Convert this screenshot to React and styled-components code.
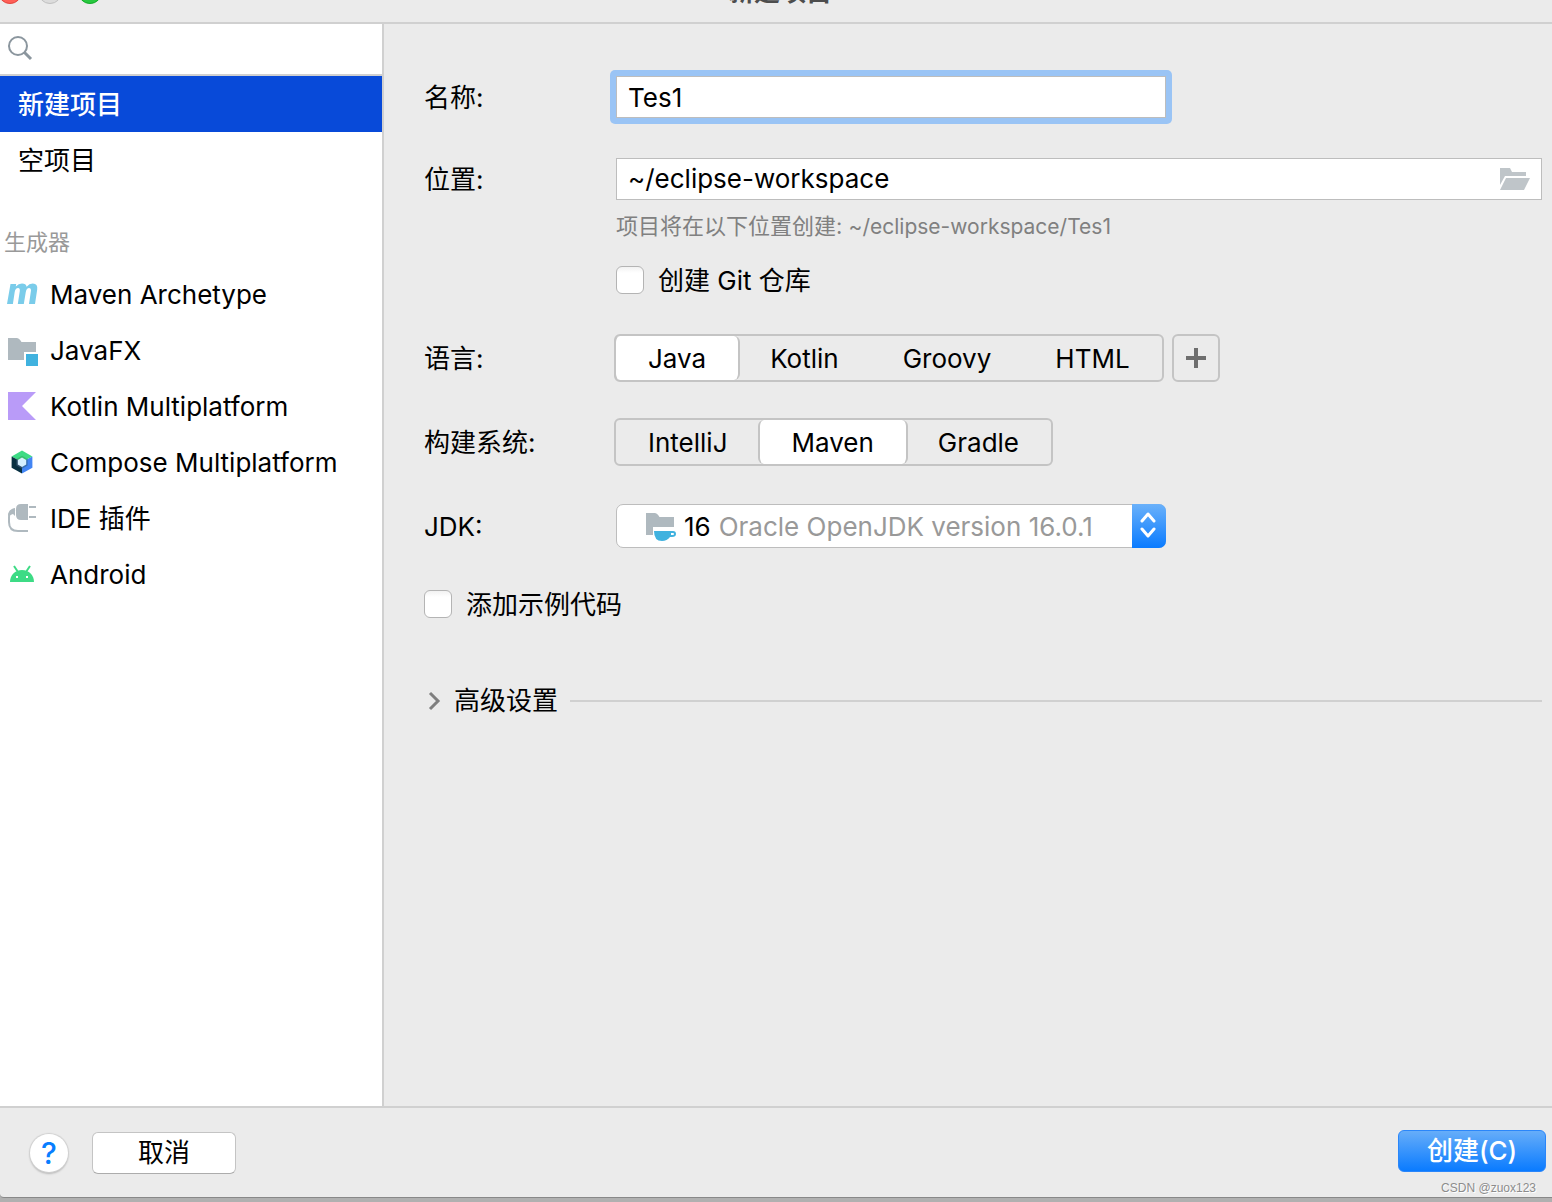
import React, { useState } from 'react';
import styled, { createGlobalStyle, css } from 'styled-components';

const MavenIcon = () => (
  <svg width="32" height="32" viewBox="0 0 32 32" aria-hidden="true">
    <path
      fill="#7accea"
      d="M4.500 5h5.700l-.4 2.400Q12.500 4.600 16 4.600q4 0 4.600 3.200 2.600-3.200 6.200-3.200 5.200 0 4.400 6L29 25h-6l2-13.500q.3-2.500-1.800-2.500-2.700 0-3.400 4l-2 12h-6l2-13q.3-3-1.700-3-2.700 0-3.400 4l-1.800 12H1z"
    />
  </svg>
);

const JavaFxIcon = () => (
  <svg width="32" height="32" viewBox="0 0 32 32" aria-hidden="true">
    <path fill="#afb9bf" d="M2 3h9q2 0 3.500 2.500L15.500 7H30v10H18v8H2z" />
    <path fill="#40b2df" d="M20 19h12v12H20z" />
  </svg>
);

const KotlinIcon = () => (
  <svg width="32" height="32" viewBox="0 0 32 32" aria-hidden="true">
    <path fill="#b99bf8" d="M2 1h28L16 15l14 14H2z" />
  </svg>
);

const ComposeIcon = () => (
  <svg width="32" height="32" viewBox="0 0 32 32" aria-hidden="true">
    <path fill="#3ddb85" d="M16 3.600 26.400 9.400 16 15 5.600 9.400z" />
    <path fill="#083042" d="M5.600 9.400 16 15v11.500L5.600 20.800z" />
    <path fill="#4285f4" d="M26.400 9.400 16 15v11.500l10.400-5.700z" />
    <path fill="#37bf6e" d="m16 8.800 5.600 3.200-1.800 1.400h-7.600l-1.800-1.400z" />
    <path fill="#2a4b66" d="m10.400 12 2 1.200V17l3.600 2v2.800l-5.600-3.300z" />
    <path fill="#3870b2" d="m21.600 12-2 1.200V17L16 19v2.800l5.600-3.300z" />
    <path fill="#d6f0ff" d="m16 10.500 4.200 2.400v4.600L16 19.900l-4.200-2.400v-4.600z" />
  </svg>
);

const PluginIcon = () => (
  <svg width="32" height="32" viewBox="0 0 32 32" aria-hidden="true">
    <path
      fill="#afb9bf"
      d="M15 1h7v16h-7q-5 0-5-5V6q0-5 5-5zM23 3h7v2h-7zM23 13h7v2h-7z"
    />
    <path fill="#afb9bf" d="M2 13q0-7 7-8v8L7 11z" />
    <path fill="none" stroke="#afb9bf" strokeWidth="2" d="M9 6.500Q3 8 3 14v5q0 9 9 9h10" />
  </svg>
);

const AndroidIcon = () => (
  <svg width="32" height="32" viewBox="0 0 32 32" aria-hidden="true">
    <path fill="none" stroke="#3ddb85" strokeWidth="2" d="m8 7 4 6M24 7l-4 6" />
    <path fill="#3ddb85" d="M4 23C4 16 9 11 16 11s12 5 12 12z" />
    <path fill="#fff" d="M10 17h2v2h-2zM20 17h2v2h-2z" />
  </svg>
);

const SearchIcon = () => (
  <svg width="26" height="26" viewBox="0 0 26 26" aria-hidden="true">
    <circle cx="11" cy="10" r="9" fill="none" stroke="#8b969e" strokeWidth="2" />
    <path stroke="#8b969e" strokeWidth="3" d="m17 16 7 7" />
  </svg>
);

const FolderIcon = () => (
  <svg width="30" height="22" viewBox="0 0 30 22" aria-hidden="true">
    <path fill="#bfc5c9" d="M0 0h10l2 4h14v4H5L0 17z" />
    <path fill="#bfc5c9" d="M6 10h24l-6 12H0z" />
  </svg>
);

const JdkIcon = () => (
  <svg width="30" height="30" viewBox="0 0 30 30" aria-hidden="true">
    <path fill="#afb9bf" d="M0 1h9q2 0 3.500 2.500L13.500 5H28v10H7v8H0z" />
    <path
      fill="#40b2df"
      fillRule="evenodd"
      d="M8 19h19q3 0 3 3t-4 3h-2q-3 4-8 4-8 0-8-10zm17 2v2h2q1 0 1-1t-1-1z"
    />
  </svg>
);

const PlusIcon = () => (
  <svg width="20" height="20" viewBox="0 0 20 20" aria-hidden="true">
    <path fill="#6e6e6e" d="M8 0h4v8h8v4h-8v8H8v-8H0V8h8z" />
  </svg>
);

const ChevronIcon = () => (
  <svg width="20" height="20" viewBox="0 0 20 20" aria-hidden="true">
    <path fill="none" stroke="#7f7f7f" strokeWidth="3" d="m6 2 8 8-8 8" />
  </svg>
);

const StepperIcon = () => (
  <svg width="18" height="28" viewBox="0 0 18 28" aria-hidden="true">
    <path
      fill="none"
      stroke="#fff"
      strokeWidth="3"
      strokeLinecap="round"
      strokeLinejoin="round"
      d="m2 9 6-7 6 7M2 17l6 7 6-7"
    />
  </svg>
);

const generators = [
  { name: 'Maven Archetype', Icon: MavenIcon },
  { name: 'JavaFX', Icon: JavaFxIcon },
  { name: 'Kotlin Multiplatform', Icon: KotlinIcon },
  { name: 'Compose Multiplatform', Icon: ComposeIcon },
  { name: 'IDE 插件', Icon: PluginIcon },
  { name: 'Android', Icon: AndroidIcon },
];

const Segmented = ({ label, options, value, onChange }) => (
  <SegmentGroup role="group" aria-label={label}>
    {options.map(option => (
      <Segment
        key={option}
        type="button"
        $active={option === value}
        aria-pressed={option === value}
        onClick={() => onChange(option)}
      >
        {option}
      </Segment>
    ))}
  </SegmentGroup>
);

const App = () => {
  const [page, setPage] = useState('新建项目');
  const [name, setName] = useState('Tes1');
  const [location, setLocation] = useState('~/eclipse-workspace');
  const [language, setLanguage] = useState('Java');
  const [build, setBuild] = useState('Maven');

  return (
    <Desktop>
      <GlobalStyle />
      <Dialog>
        <TitleBar>
          <TrafficLight $color="#ff5f57" $edge="#e2463f" />
          <TrafficLight $color="#dcdcdc" $edge="#c0c0c0" />
          <TrafficLight $color="#28c840" $edge="#12ac28" />
          <Title>新建项目</Title>
        </TitleBar>
        <Body>
          <Sidebar>
            <Search>
              <SearchIcon />
              <SearchInput type="search" aria-label="搜索" />
            </Search>
            {['新建项目', '空项目'].map(item => (
              <ProjectItem
                key={item}
                type="button"
                $active={item === page}
                onClick={() => setPage(item)}
              >
                {item}
              </ProjectItem>
            ))}
            <GroupTitle>生成器</GroupTitle>
            {generators.map(({ name: item, Icon }) => (
              <GeneratorItem
                key={item}
                type="button"
                $active={item === page}
                onClick={() => setPage(item)}
              >
                <Icon />
                {item}
              </GeneratorItem>
            ))}
          </Sidebar>
          <Form>
            <Row>
              <Label htmlFor="name">名称:</Label>
              <FocusRing>
                <TextInput id="name" value={name} onChange={e => setName(e.target.value)} />
              </FocusRing>
            </Row>
            <Row $gap={40}>
              <Label htmlFor="location">位置:</Label>
              <PathField>
                <PathInput
                  id="location"
                  value={location}
                  onChange={e => setLocation(e.target.value)}
                />
                <BrowseButton type="button" aria-label="浏览">
                  <FolderIcon />
                </BrowseButton>
              </PathField>
            </Row>
            <Hint>
              项目将在以下位置创建: <HintPath>{location}/{name}</HintPath>
            </Hint>
            <CheckLabel $gap={26} $indent>
              <CheckBox type="checkbox" />
              <CheckText>创建 Git 仓库</CheckText>
            </CheckLabel>
            <Row $gap={40}>
              <Label as="span">语言:</Label>
              <Segmented
                label="语言"
                options={['Java', 'Kotlin', 'Groovy', 'HTML']}
                value={language}
                onChange={setLanguage}
              />
              <AddButton type="button" aria-label="添加语言">
                <PlusIcon />
              </AddButton>
            </Row>
            <Row $gap={36}>
              <Label as="span">构建系统:</Label>
              <Segmented
                label="构建系统"
                options={['IntelliJ', 'Maven', 'Gradle']}
                value={build}
                onChange={setBuild}
              />
            </Row>
            <Row $gap={38}>
              <Label htmlFor="jdk">JDK:</Label>
              <Combo>
                <JdkIcon />
                <span>16</span>
                <ComboSelect id="jdk">
                  <option>Oracle OpenJDK version 16.0.1</option>
                </ComboSelect>
                <Stepper>
                  <StepperIcon />
                </Stepper>
              </Combo>
            </Row>
            <CheckLabel $gap={42}>
              <CheckBox type="checkbox" />
              <CheckText>添加示例代码</CheckText>
            </CheckLabel>
            <Advanced type="button" aria-expanded="false">
              <ChevronIcon />
              高级设置
              <Rule />
            </Advanced>
          </Form>
        </Body>
        <Footer>
          <HelpButton type="button" aria-label="帮助">?</HelpButton>
          <CancelButton type="button">取消</CancelButton>
          <CreateButton type="button">创建(C)</CreateButton>
        </Footer>
      </Dialog>
      <Watermark>CSDN @zuox123</Watermark>
    </Desktop>
  );
};

const GlobalStyle = createGlobalStyle`
  * {
    box-sizing: border-box;
  }
  body {
    margin: 0;
    color: #000;
    font: 26px/30px Inter, 'Noto Sans CJK SC', sans-serif;
  }
  button, input, select {
    margin: 0;
    padding: 0;
    border: 0;
    outline: 0;
    color: inherit;
    font: inherit;
    background: none;
  }
  svg {
    flex: none;
    display: block;
  }
`
const Desktop = styled.div`
  position: relative;
  height: 100vh;
  padding-bottom: 4px;
  overflow: hidden;
  background: #b0b0b0;
`
const Dialog = styled.div`
  display: flex;
  flex-direction: column;
  height: 100%;
  background: #ebebeb;
  border-bottom: 1px solid #888;
  border-bottom-left-radius: 4px;
`
const TitleBar = styled.header`
  flex: none;
  display: flex;
  align-items: center;
  gap: 16px;
  height: 62px;
  margin-top: -38px;
  border-bottom: 2px solid #d0d0d0;
`
const TrafficLight = styled.span`
  width: 24px;
  height: 24px;
  border-radius: 50%;
  border: 1px solid ${props => props.$edge};
  background: ${props => props.$color};
  &:first-child {
    margin-left: -2px;
  }
`
const Title = styled.span`
  flex: 1;
  margin-right: 110px;
  text-align: center;
  font-weight: 700;
  color: #4d4d4d;
`
const Body = styled.div`
  flex: 1;
  display: flex;
  min-height: 0;
`
const Sidebar = styled.nav`
  flex: none;
  width: 384px;
  border-right: 2px solid #d0d0d0;
  background: #fff;
`
const Search = styled.div`
  display: flex;
  align-items: center;
  gap: 8px;
  height: 52px;
  padding-left: 7px;
  border-bottom: 2px solid #d0d0d0;
`
const SearchInput = styled.input`
  flex: 1;
  min-width: 0;
  appearance: none;
`
const itemStyle = css`
  display: flex;
  align-items: center;
  width: 100%;
  height: 56px;
  text-align: left;
  ${props => props.$active && css`
    background: #084ad9;
    color: #fff;
    font-weight: 500;
  `}
`
const ProjectItem = styled.button`
  ${itemStyle}
  padding-top: 2px;
  padding-left: 18px;
`
const GeneratorItem = styled.button`
  ${itemStyle}
  gap: 12px;
  padding-left: 6px;
`
const GroupTitle = styled.h2`
  margin: 0;
  padding: 40px 4px 11px;
  font-size: 22px;
  font-weight: 400;
  line-height: 28px;
  color: #999;
`
const Form = styled.main`
  flex: 1;
  min-width: 0;
  padding: 52px 10px 0 40px;
`
const Row = styled.div`
  display: flex;
  align-items: center;
  margin-top: ${props => props.$gap || 0}px;
`
const Label = styled.label`
  flex: none;
  width: 192px;
  padding-top: 2px;
`
const FocusRing = styled.div`
  width: 562px;
  margin: -6px;
  padding: 6px;
  border-radius: 5px;
  background: #9ac4f5;
`
const fieldStyle = css`
  height: 42px;
  border: 1px solid #bdbdbd;
  background: #fff;
`
const TextInput = styled.input`
  ${fieldStyle}
  display: block;
  width: 100%;
  padding: 0 11px;
`
const PathField = styled.div`
  ${fieldStyle}
  flex: 1;
  display: flex;
  align-items: center;
  padding: 0 11px;
`
const PathInput = styled.input`
  flex: 1;
  min-width: 0;
`
const BrowseButton = styled.button`
  cursor: pointer;
`
const Hint = styled.p`
  margin: 12px 0 0 192px;
  font-size: 22px;
  line-height: 28px;
  color: #808080;
`
const HintPath = styled.span`
  font-size: 21px;
  line-height: 1;
`
const CheckLabel = styled.label`
  display: flex;
  align-items: center;
  gap: 14px;
  width: fit-content;
  height: 28px;
  margin-top: ${props => props.$gap}px;
  margin-left: ${props => (props.$indent ? 192 : 0)}px;
`
const CheckBox = styled.input`
  appearance: none;
  width: 28px;
  height: 28px;
  border: 1px solid #b4b4b4;
  border-radius: 6px;
  background: linear-gradient(#f2f2f2, #fff 6px);
  &:checked {
    background: #1a82fb;
  }
`
const CheckText = styled.span`
  padding-top: 2px;
`
const SegmentGroup = styled.div`
  display: flex;
  height: 48px;
  margin-left: -2px;
  border: 2px solid #c4c4c4;
  border-radius: 6px;
`
const Segment = styled.button`
  padding: 2px 32px 0;
  ${props => props.$active && css`
    margin: 0 -2px;
    border-left: 2px solid #c4c4c4;
    border-right: 2px solid #c4c4c4;
    border-radius: 6px;
    background: #fff;
    background-clip: padding-box;
  `}
`
const AddButton = styled.button`
  display: flex;
  align-items: center;
  justify-content: center;
  width: 48px;
  height: 48px;
  margin-left: 8px;
  border: 2px solid #c4c4c4;
  border-radius: 6px;
`
const Combo = styled.div`
  position: relative;
  display: flex;
  align-items: center;
  gap: 8px;
  width: 550px;
  height: 44px;
  padding: 2px 0 0 29px;
  border: 1px solid #bdbdbd;
  border-radius: 7px;
  background: #fff;
`
const ComboSelect = styled.select`
  flex: 1;
  min-width: 0;
  padding-right: 34px;
  appearance: none;
  color: #999;
`
const Stepper = styled.span`
  position: absolute;
  top: -1px;
  right: -1px;
  bottom: -1px;
  display: flex;
  align-items: center;
  justify-content: center;
  width: 34px;
  border-radius: 0 7px 7px 0;
  background: linear-gradient(#6ab1fa, #0a7bff);
  pointer-events: none;
`
const Advanced = styled.button`
  display: flex;
  align-items: center;
  gap: 12px;
  width: 100%;
  margin-top: 68px;
  & > svg {
    margin-right: -2px;
  }
`
const Rule = styled.span`
  flex: 1;
  height: 2px;
  background: #d0d0d0;
`
const Footer = styled.footer`
  flex: none;
  display: flex;
  align-items: center;
  height: 91px;
  padding: 0 6px 0 30px;
  border-top: 2px solid #d0d0d0;
`
const HelpButton = styled.button`
  width: 38px;
  height: 38px;
  margin-right: 24px;
  border-radius: 50%;
  background: #fff;
  box-shadow: 0 0 1px 1px #d0d0d0, 0 2px 2px #b4b4b4;
  font-size: 30px;
  font-weight: 500;
  color: #087eff;
`
const CancelButton = styled.button`
  width: 144px;
  height: 42px;
  border: 1px solid #c4c4c4;
  border-bottom-color: #acacac;
  border-radius: 6px;
  background: #fff;
`
const CreateButton = styled.button`
  width: 148px;
  height: 42px;
  margin-bottom: 4px;
  margin-left: auto;
  border: 1px solid #2a86fa;
  border-radius: 6px;
  background: linear-gradient(#66adf9, #0a7bff);
  color: #fff;
  font-weight: 500;
`
const Watermark = styled.span`
  position: absolute;
  right: 16px;
  bottom: 6px;
  font: 12px/16px 'Liberation Sans', Arial, sans-serif;
  color: #8c8c8c;
  text-shadow: 1px 1px 0 #fff;
`

export default App;
